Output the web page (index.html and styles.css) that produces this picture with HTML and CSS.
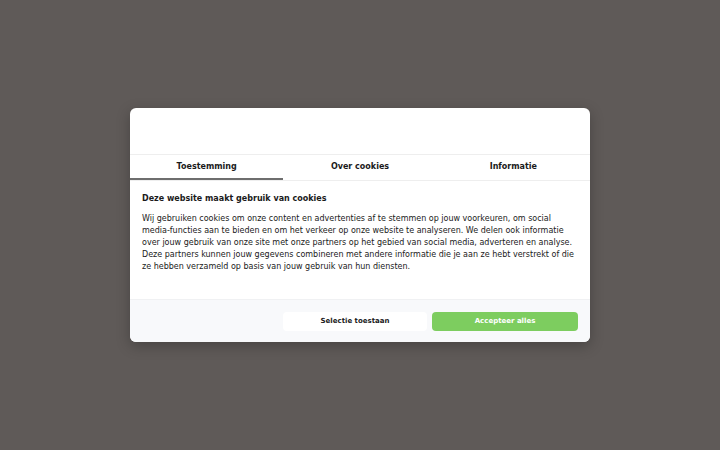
FILE: index.html
```html
<!DOCTYPE html>
<html lang="nl">
<head>
<meta charset="utf-8">
<link rel="stylesheet" href="styles.css">
</head>
<body>
<div class="overlay">
  <div class="dialog">
    <div class="header"></div>
    <div class="tabs">
      <div class="tab active">Toestemming</div>
      <div class="tab">Over cookies</div>
      <div class="tab">Informatie</div>
    </div>
    <div class="content">
      <h2 class="title">Deze website maakt gebruik van cookies</h2>
      <p class="text">Wij gebruiken cookies om onze content en advertenties af te stemmen op jouw voorkeuren, om social media-functies aan te bieden en om het verkeer op onze website te analyseren. We delen ook informatie over jouw gebruik van onze site met onze partners op het gebied van social media, adverteren en analyse. Deze partners kunnen jouw gegevens combineren met andere informatie die je aan ze hebt verstrekt of die ze hebben verzameld op basis van jouw gebruik van hun diensten.</p>
    </div>
    <div class="footer">
      <button class="btn btn-select">Selectie toestaan</button>
      <button class="btn btn-accept">Accepteer alles</button>
    </div>
  </div>
</div>
</body>
</html>
```
FILE: styles.css
```css
html, body {
  margin: 0;
  padding: 0;
  width: 720px;
  height: 450px;
  overflow: hidden;
  background: #5f5a58;
  font-family: "DejaVu Sans", sans-serif;
}
.overlay {
  width: 720px;
  height: 450px;
  display: flex;
  justify-content: center;
  padding-top: 108px;
  box-sizing: border-box;
}
.dialog {
  width: 460px;
  height: 234px;
  background: #fff;
  border-radius: 6px;
  box-shadow: 0 4px 14px rgba(0,0,0,0.25);
  display: flex;
  flex-direction: column;
  overflow: hidden;
}
.header {
  height: 46px;
  border-bottom: 1px solid #eeeeee;
  flex: none;
}
.tabs {
  display: flex;
  height: 25px;
  border-bottom: 1px solid #eeeeee;
  flex: none;
}
.tab {
  flex: 1;
  display: flex;
  align-items: center;
  justify-content: center;
  font-size: 8px;
  font-weight: bold;
  color: #1a1a1a;
  box-sizing: border-box;
  padding-bottom: 2px;
}
.tab.active {
  border-bottom: 2px solid #6e6e6e;
  padding-bottom: 0;
}
.content {
  padding: 12px 12px 0 12px;
  flex: 1;
}
.title {
  margin: 0;
  font-size: 8px;
  font-weight: bold;
  color: #1a1a1a;
  line-height: 12px;
}
.text {
  margin: 8px 0 0 0;
  font-size: 8px;
  line-height: 12px;
  color: #1a1a1a;
}
.footer {
  flex: none;
  height: 43px;
  background: #f8f9fb;
  border-top: 1px solid #f0f1f3;
  display: flex;
  justify-content: flex-end;
  align-items: center;
  gap: 5px;
  padding: 0 12px;
  box-sizing: border-box;
}
.btn {
  height: 19px;
  border: none;
  border-radius: 4px;
  font-family: "DejaVu Sans", sans-serif;
  font-size: 7px;
  font-weight: bold;
  padding: 0;
}
.btn-select {
  background: #fff;
  color: #1a1a1a;
  width: 144px;
}
.btn-accept {
  background: #7dcd5f;
  color: #fff;
  width: 146px;
}
```
